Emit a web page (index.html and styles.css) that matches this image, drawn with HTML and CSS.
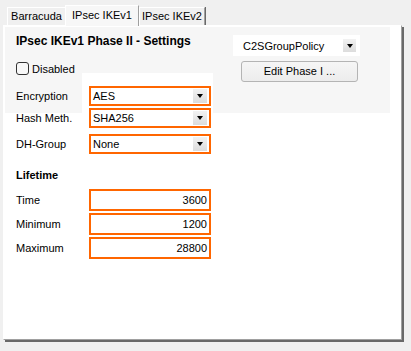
FILE: index.html
```html
<!DOCTYPE html>
<html>
<head>
<meta charset="utf-8">
<link rel="stylesheet" href="styles.css">
</head>
<body>
<div class="tabs">
  <div class="tab tab-first">Barracuda</div>
  <div class="tab tab-active">IPsec IKEv1</div>
  <div class="tab tab-last">IPsec IKEv2</div>
</div>
<div class="panel">
  <div class="col-form">
    <div class="title">IPsec IKEv1 Phase II - Settings</div>
    <div class="check"><span class="box"></span><span class="check-text">Disabled</span></div>
    <div class="row row-enc"><span class="lbl">Encryption</span><div class="combo"><span class="val">AES</span><span class="drop"></span></div></div>
    <div class="row row-hash"><span class="lbl">Hash Meth.</span><div class="combo"><span class="val">SHA256</span><span class="drop"></span></div></div>
    <div class="row row-dh"><span class="lbl">DH-Group</span><div class="combo"><span class="val">None</span><span class="drop"></span></div></div>
    <div class="subtitle">Lifetime</div>
    <div class="row row-time"><span class="lbl">Time</span><div class="num">3600</div></div>
    <div class="row row-lt"><span class="lbl">Minimum</span><div class="num">1200</div></div>
    <div class="row row-lt"><span class="lbl">Maximum</span><div class="num">28800</div></div>
  </div>
  <div class="col-side">
    <div class="policy"><span class="val">C2SGroupPolicy</span><span class="drop drop-small"></span></div>
    <div class="btn">Edit Phase I ...</div>
  </div>
</div>
</body>
</html>
```
FILE: styles.css
```css
* { box-sizing: border-box; }
html, body { margin: 0; padding: 0; }
body {
  background: #f0f0f0;
  font-family: "Liberation Sans", Arial, sans-serif;
  font-size: 11px;
  color: #000;
  width: 411px;
  height: 351px;
  overflow: hidden;
}
.tabs {
  display: flex;
  align-items: flex-end;
  height: 20px;
  margin-top: 5px;
  padding-left: 7px;
}
.tab {
  height: 18px;
  line-height: 17px;
  text-align: center;
  border-top: 1px solid #ffffff;
  border-left: 1px solid #ffffff;
  border-right: 1px solid #a0a0a0;
  background: #f0f0f0;
}
.tab-first { width: 58px; border-right: none; }
.tab-last { width: 66px; box-shadow: 1px 0 0 #696969; }
.tab-active {
  width: 74px;
  height: 21px;
  line-height: 19px;
  margin-bottom: -1px;
  background: #f7f7f7;
  z-index: 2;
}
.panel {
  display: flex;
  width: 399px;
  height: 315px;
  margin-left: 3px;
  padding: 8px 0 0 12px;
  border-top: 1px solid #ffffff;
  border-left: 1px solid #ffffff;
  border-right: 1px solid #a0a0a0;
  border-bottom: 1px solid #a0a0a0;
  box-shadow: 2px 2px 0 #696969;
  background:
    linear-gradient(#ffffff, #ffffff) 78px 47px / 131px 40px no-repeat,
    linear-gradient(#f6f6f6, #f6f6f6) 1px 1px / 385px 86px no-repeat,
    #ffffff;
}
.col-form { width: 195px; flex: none; }
.title {
  font-weight: bold;
  font-size: 12px;
  line-height: 14px;
  height: 14px;
  white-space: nowrap;
}
.check {
  display: flex;
  align-items: center;
  height: 13px;
  margin-top: 14px;
}
.box {
  width: 13px;
  height: 13px;
  border: 1px solid #333333;
  border-radius: 3px;
  background: #f8f8f8;
  flex: none;
}
.check-text { margin-left: 3px; }
.row {
  display: grid;
  grid-template-columns: 73px 122px;
  align-items: center;
}
.row-enc { margin-top: 11px; }
.row-hash { margin-top: 2px; }
.row-dh { margin-top: 6px; }
.row-time { margin-top: 7px; }
.row-lt { margin-top: 2px; }
.lbl { white-space: nowrap; }
.combo {
  display: flex;
  align-items: center;
  height: 20px;
  border: 2px solid #ff6600;
  background: #ffffff;
  padding-left: 2px;
}
.drop {
  width: 14px;
  height: 14px;
  margin-left: auto;
  margin-right: 2px;
  background: linear-gradient(#f2f2f2, #dcdcdc);
  display: flex;
  align-items: center;
  justify-content: center;
}
.drop::after {
  content: "";
  width: 0;
  height: 0;
  border-left: 3.5px solid transparent;
  border-right: 3.5px solid transparent;
  border-top: 4px solid #000000;
}
.subtitle {
  font-weight: bold;
  line-height: 14px;
  height: 14px;
  margin-top: 14px;
}
.num {
  height: 22px;
  line-height: 18px;
  border: 2px solid #ff6600;
  background: #ffffff;
  text-align: right;
  padding-right: 2px;
}
.col-side {
  margin-left: 22px;
  width: 127px;
  flex: none;
}
.policy {
  display: flex;
  align-items: center;
  width: 127px;
  height: 21px;
  margin-top: 1px;
  padding-left: 10px;
  background: #ffffff;
}
.drop-small {
  width: 13px;
  height: 13px;
  margin-right: 4px;
}
.btn {
  width: 117px;
  height: 21px;
  margin-left: 8px;
  margin-top: 5px;
  border: 1px solid #b4b4b4;
  border-radius: 3px;
  background: linear-gradient(#f6f6f6, #ececec);
  text-align: center;
  line-height: 19px;
}
```
